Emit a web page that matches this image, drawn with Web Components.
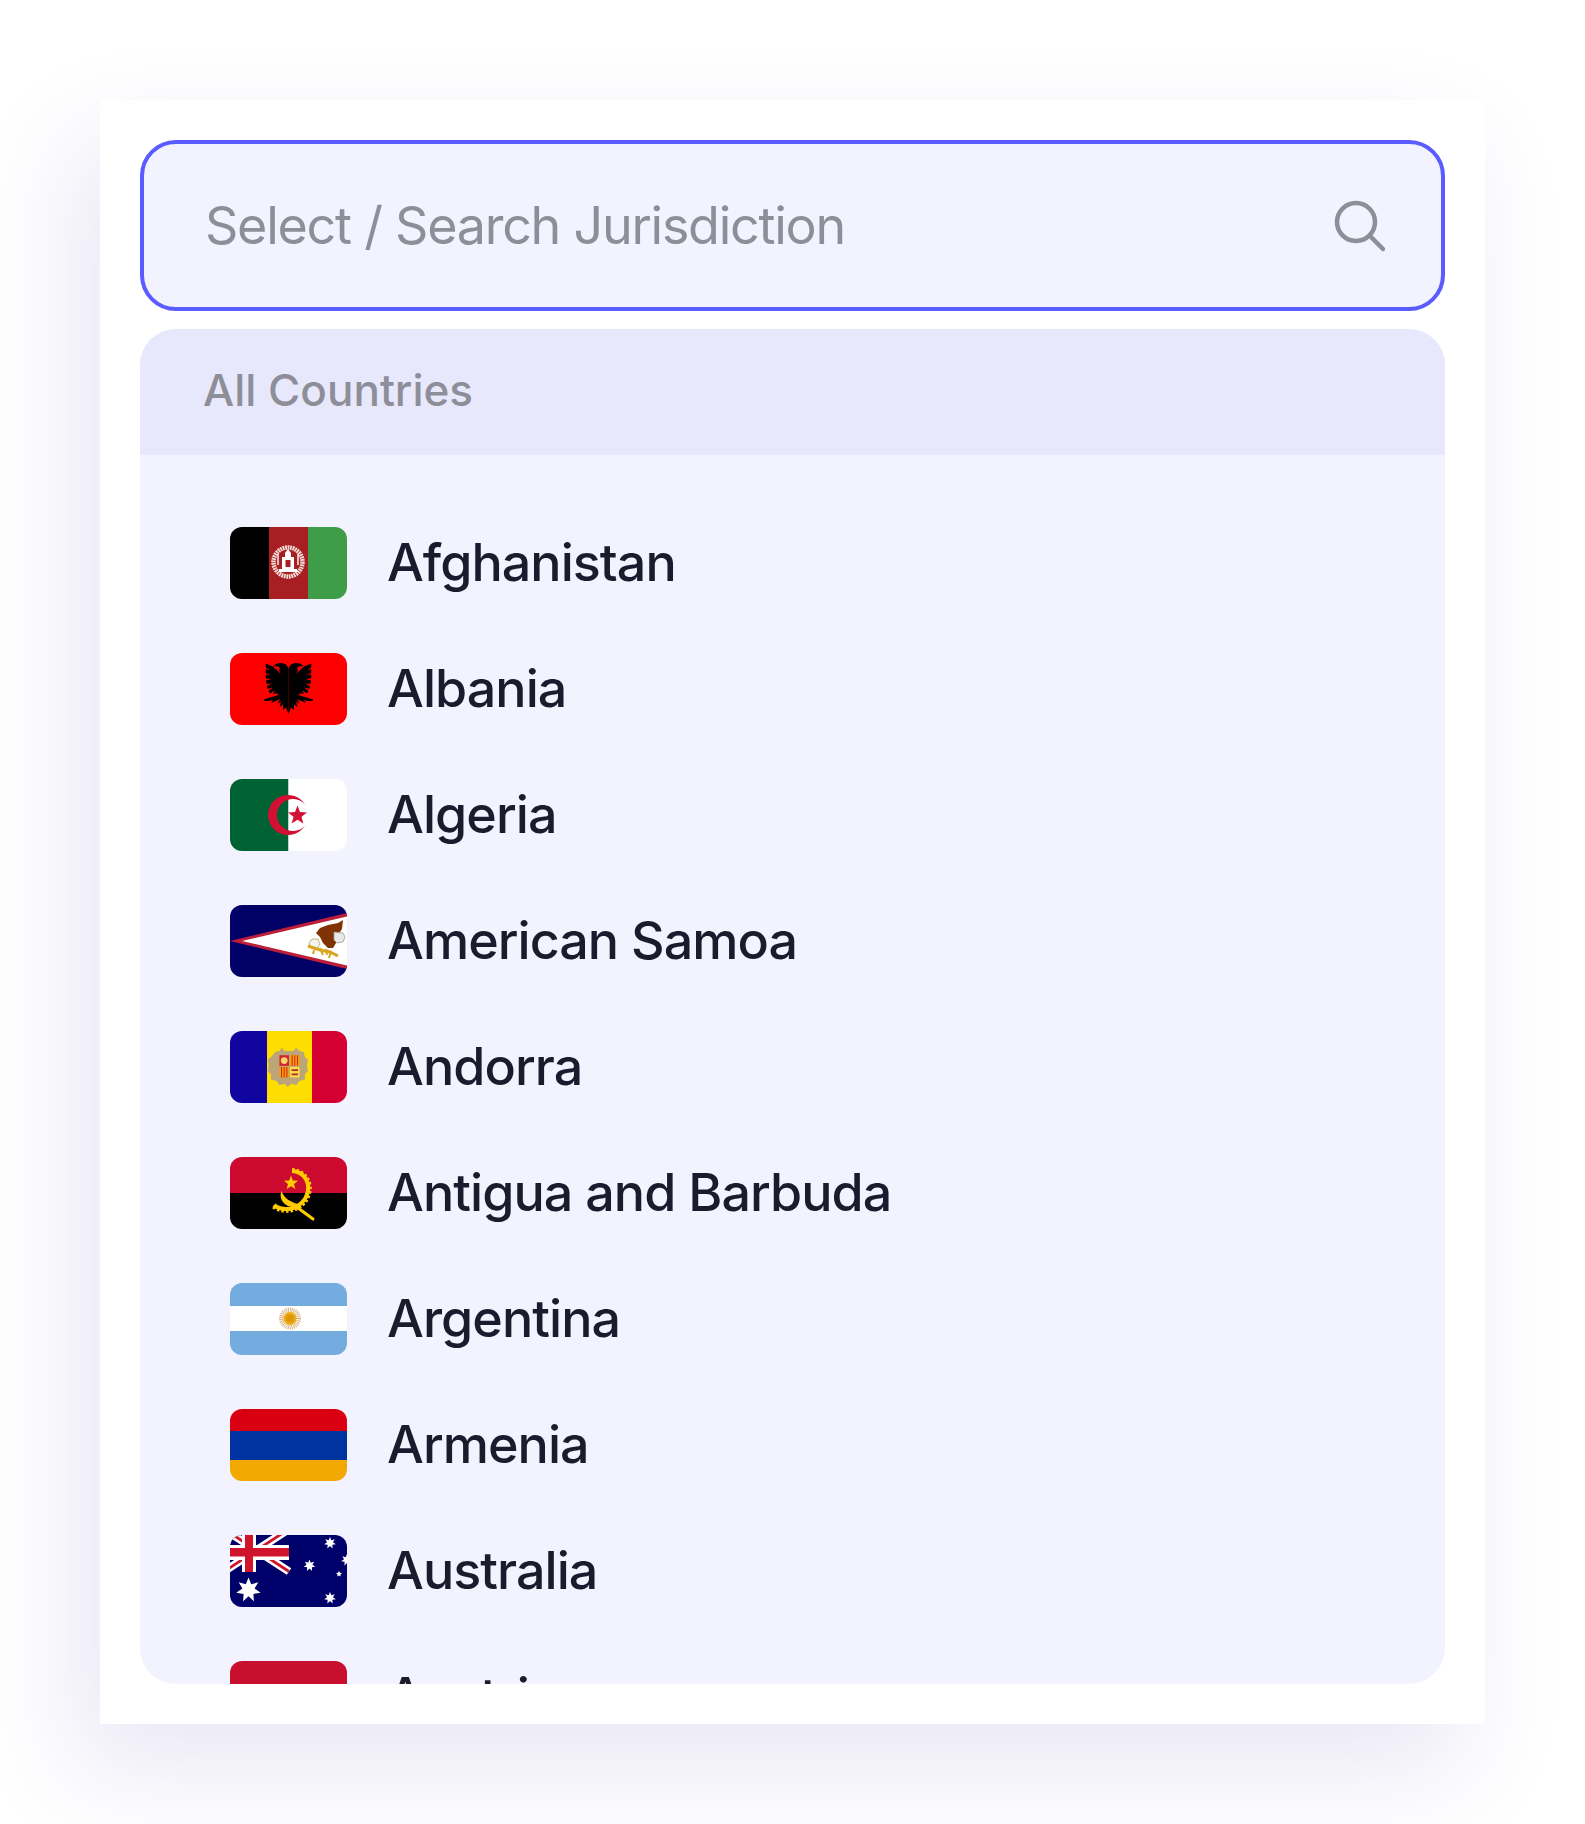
<!DOCTYPE html>
<html lang="en">
<head>
<meta charset="utf-8">
<title>Select Jurisdiction</title>
<style>
    html, body {
        margin: 0;
        height: 1824px;
        overflow: hidden;
        background: #fff;
        font-family: Inter, "Noto Sans", sans-serif;
    }
    body {
        padding: 100px 100px 0;
        box-sizing: border-box;
    }
</style>
</head>
<body>
<jurisdiction-card>
    <search-field placeholder="Select / Search Jurisdiction"></search-field>
    <country-panel heading="All Countries">
        <country-row code="af" name="Afghanistan"></country-row>
        <country-row code="al" name="Albania"></country-row>
        <country-row code="dz" name="Algeria"></country-row>
        <country-row code="as" name="American Samoa"></country-row>
        <country-row code="ad" name="Andorra"></country-row>
        <country-row code="ao" name="Antigua and Barbuda"></country-row>
        <country-row code="ar" name="Argentina"></country-row>
        <country-row code="am" name="Armenia"></country-row>
        <country-row code="au" name="Australia"></country-row>
        <country-row code="at" name="Austria"></country-row>
    </country-panel>
</jurisdiction-card>
<script>
function star(cx, cy, r, points, inner) {
    const out = [];
    for (let i = 0; i < points * 2; i++) {
        const rad = i % 2 ? r * inner : r;
        const a = -Math.PI / 2 + i * Math.PI / points;
        out.push((cx + rad * Math.cos(a)).toFixed(2) + ',' + (cy + rad * Math.sin(a)).toFixed(2));
    }
    return out.join(' ');
}

const eagleHalf = 'M58.500 15L56 11.500 52 10 47 10.500 43 13 48 13.500 50 15 49 17 50.500 21 47 17 43 13.500 35.500 10.500 36 15 40 16.500 35.500 16.500 36 20.500 41 21 35.500 22 36 25.500 41.500 26 36 27.500 36.500 31 42 30.500 37 33 37.500 36 43 34.500 38.500 38 40 40.500 45 37.500 43 41 46 40.500 49 41 46 43 40 44.500 34 46.500 34.500 48 39 48 43 47 41 50 47 47.500 50 46 47.500 51 51 48.500 49.500 54 53 51.500 53 57 56 54.500 58.500 61Z';

const FLAGS = {
    af: `<rect width="39" height="72" fill="#000"/>
        <rect x="39" width="39" height="72" fill="#a71f23"/>
        <rect x="78" width="39" height="72" fill="#3f9c48"/>
        <circle cx="58" cy="35" r="14.500" fill="none" stroke="#f3dcd6" stroke-width="4.500" stroke-dasharray="1.800 .7"/>
        <path d="M49 45h18v-3h-3V30h-3v-4l-3-4-3 4v4h-3v12h-3z" fill="#fff"/>
        <rect x="55.500" y="33" width="5" height="7" fill="#a71f23"/>
        <path d="M48 27v11M68 27v11" stroke="#fff" stroke-width="1.400"/>`,
    al: `<rect width="117" height="72" fill="#f00"/>
        <path d="${eagleHalf}"/>
        <path d="${eagleHalf}" transform="translate(117 0) scale(-1 1)"/>`,
    dz: `<rect width="58.500" height="72" fill="#006233"/>
        <rect x="58.500" width="58.500" height="72" fill="#fff"/>
        <path fill="#d21034" d="M75 25.500A20 20 0 1 0 75 46.500 16 16 0 1 1 75 25.500Z"/>
        <polygon fill="#d21034" points="${star(67.500, 36.500, 10, 5, .42)}"/>`,
    as: `<rect width="117" height="72" fill="#006"/>
        <path d="M117 8 0 36l117 28z" fill="#bd1f3a"/>
        <path d="M117 11.500 12 36l105 24.500z" fill="#fff"/>
        <path d="M113 15l-5 3-10 2-8 3-4 5 4 4 3 6 5 5h5l3-5 2-8 4-6z" fill="#7f3304"/>
        <path d="M104 27l9 1 2 4-2 5-6 1-3-3z" fill="#e8e8e8" stroke="#9a9a9a" stroke-width=".8"/>
        <path d="M82 34l-3 4 2 5 6 1 3-5-2-5z" fill="#f2f2f2" stroke="#b9a650" stroke-width=".8"/>
        <path d="M78 41l12 4 10 2 8 4" fill="none" stroke="#d9a520" stroke-width="3"/>
        <path d="M84 45l-1 4M90 43l3 7M96 44l1 6M101 46l-2 7" stroke="#d9a520" stroke-width="2"/>`,
    ad: `<rect width="37" height="72" fill="#10069f"/>
        <rect x="37" width="45" height="72" fill="#fedd00"/>
        <rect x="82" width="35" height="72" fill="#d50032"/>
        <g transform="translate(59.500 37.500) scale(1.060) translate(-59.500 -37.500)">
            <path d="M46 22l4-1 2-3 3 3h8l3-3 3 3 4 1 1 5 3 2-1 6 1 5-3 3v5l-5 1-3 4-5-1-3 3-3-3-5 1-3-4-5-1v-5l-3-3 1-5-1-6 3-2z" fill="#bda57a"/>
            <rect x="50" y="25" width="9" height="10" fill="#d5222f"/>
            <circle cx="54.500" cy="30" r="3.200" fill="#f7d66a"/>
            <rect x="60" y="25" width="9" height="10" fill="#f5a300"/>
            <path d="M62 25v10M64.500 25v10M67 25v10" stroke="#d5222f" stroke-width="1"/>
            <rect x="50" y="36" width="9" height="10" fill="#f5a300"/>
            <path d="M52 36v10M54.500 36v10M57 36v10" stroke="#d5222f" stroke-width="1"/>
            <rect x="60" y="36" width="9" height="10" fill="#f8dc4a"/>
            <path d="M61.500 39h6M61.500 43h6" stroke="#b8252b" stroke-width="1.800"/>
        </g>`,
    ao: `<rect width="117" height="36" fill="#cc092f"/>
        <rect y="36" width="117" height="36" fill="#000"/>
        <polygon fill="#ffcb00" points="${star(61, 26, 7.500, 5, .42)}"/>
        <path d="M62 14C74 15 79 24 78 33 77 44 66 53 55 52 50 51.500 46 50 44 48" fill="none" stroke="#ffcb00" stroke-width="4"/>
        <path d="M62 12.500C75 13.500 81 24 80 33 79 46 66 55.500 55 54 50 53.500 45 52 42 49" fill="none" stroke="#ffcb00" stroke-width="3.400" stroke-dasharray="2.500 2"/>
        <path d="M64 48L83 62" fill="none" stroke="#ffcb00" stroke-width="3" stroke-linecap="round"/>
        <path d="M51.500 34C49 40 52 46 58 49L66 51 68 47C60 45 54 41 51.500 34Z" fill="#ffcb00"/>`,
    ar: `<rect width="117" height="72" fill="#74acdf"/>
        <rect y="23" width="117" height="25" fill="#fff"/>
        <circle cx="60" cy="35.500" r="8.500" fill="none" stroke="#d09a5a" stroke-width="5" stroke-dasharray=".9 .9" opacity=".8"/>
        <circle cx="60" cy="35.500" r="6.500" fill="#f0ad10"/>
        <circle cx="60" cy="35.500" r="4" fill="#dd970a"/>`,
    am: `<rect width="117" height="22" fill="#d90012"/>
        <rect y="22" width="117" height="29" fill="#0033a0"/>
        <rect y="51" width="117" height="21" fill="#f2a800"/>`,
    au: `<rect width="117" height="72" fill="#00006a"/>
        <path d="M-6-6 59 36.500M59-6-6 36.500" stroke="#fff" stroke-width="8"/>
        <path d="M-6-6 59 36.500M59-6-6 36.500" stroke="#cf142b" stroke-width="2.800"/>
        <rect x="12" width="14" height="37" fill="#fff"/>
        <rect y="10" width="59" height="15" fill="#fff"/>
        <rect x="15" width="8" height="37" fill="#cf142b"/>
        <rect y="13" width="59" height="8.500" fill="#cf142b"/>
        <g fill="#fff">
            <polygon points="${star(18.500, 55, 12.500, 7, .5)}"/>
            <polygon points="${star(100, 8, 6, 7, .5)}"/>
            <polygon points="${star(79.500, 30.500, 6, 7, .5)}"/>
            <polygon points="${star(117, 25, 6, 7, .5)}"/>
            <polygon points="${star(109, 39, 3.200, 5, .45)}"/>
            <polygon points="${star(100, 63, 6, 7, .5)}"/>
        </g>`,
    at: `<rect width="117" height="24" fill="#c8102e"/>
        <rect y="24" width="117" height="24" fill="#fff"/>
        <rect y="48" width="117" height="24" fill="#c8102e"/>`
};

class JurisdictionCard extends HTMLElement {
    constructor() {
        super();
        this.attachShadow({ mode: 'open' });
        this.shadowRoot.innerHTML = `
            <style>
                :host {
                    display: flex;
                    flex-direction: column;
                    gap: 18px;
                    box-sizing: border-box;
                    width: 1385px;
                    height: 1624px;
                    padding: 40px;
                    background: #fff;
                    box-shadow: -24px 44px 100px rgba(70, 50, 170, 0.12);
                }
            </style>
            <slot></slot>
        `;
    }
}

class SearchField extends HTMLElement {
    constructor() {
        super();
        this.attachShadow({ mode: 'open' });
        this.shadowRoot.innerHTML = `
            <style>
                :host {
                    display: flex;
                    align-items: center;
                    justify-content: space-between;
                    flex: none;
                    box-sizing: border-box;
                    height: 171px;
                    padding: 0 54px 0 61px;
                    background: #f3f3ff;
                    border: 4px solid #5a5cff;
                    border-radius: 36px;
                    color: #8e8e99;
                }
                span {
                    font-size: 52px;
                    letter-spacing: -1.25px;
                }
                svg {
                    display: block;
                    width: 54px;
                    height: 54px;
                }
            </style>
            <span></span>
            <svg viewBox="0 0 54 54" fill="none" stroke="#8e8e99" stroke-width="4.500" stroke-linecap="round">
                <circle cx="23" cy="23" r="19"/>
                <path d="M37 37 50 50"/>
            </svg>
        `;
        this.shadowRoot.querySelector('span').textContent = this.getAttribute('placeholder');
    }
}

class CountryPanel extends HTMLElement {
    constructor() {
        super();
        this.attachShadow({ mode: 'open' });
        this.shadowRoot.innerHTML = `
            <style>
                :host {
                    display: flex;
                    flex-direction: column;
                    flex: 1;
                    min-height: 0;
                    overflow: hidden;
                    background: #f3f3ff;
                    border-radius: 36px;
                }
                header {
                    flex: none;
                    display: flex;
                    align-items: center;
                    box-sizing: border-box;
                    height: 126px;
                    padding: 0 0 4px 63px;
                    background: #e8e8fd;
                    color: #8e8e99;
                    font-size: 44px;
                    font-weight: 500;
                }
                .list {
                    padding: 45px 0 0 90px;
                }
            </style>
            <header></header>
            <div class="list"><slot></slot></div>
        `;
        this.shadowRoot.querySelector('header').textContent = this.getAttribute('heading');
    }
}

class CountryRow extends HTMLElement {
    constructor() {
        super();
        this.attachShadow({ mode: 'open' });
        this.shadowRoot.innerHTML = `
            <style>
                :host {
                    display: flex;
                    align-items: center;
                    gap: 40px;
                    height: 126px;
                    color: #1c1b2e;
                    font-size: 52px;
                    font-weight: 500;
                    letter-spacing: -0.95px;
                }
                span {
                    padding-bottom: 2px;
                }
                svg {
                    display: block;
                    flex: none;
                    width: 117px;
                    height: 72px;
                    border-radius: 12px;
                }
            </style>
            <svg viewBox="0 0 117 72">${FLAGS[this.getAttribute('code')]}</svg>
            <span></span>
        `;
        this.shadowRoot.querySelector('span').textContent = this.getAttribute('name');
    }
}

customElements.define('jurisdiction-card', JurisdictionCard);
customElements.define('search-field', SearchField);
customElements.define('country-panel', CountryPanel);
customElements.define('country-row', CountryRow);
</script>
</body>
</html>
